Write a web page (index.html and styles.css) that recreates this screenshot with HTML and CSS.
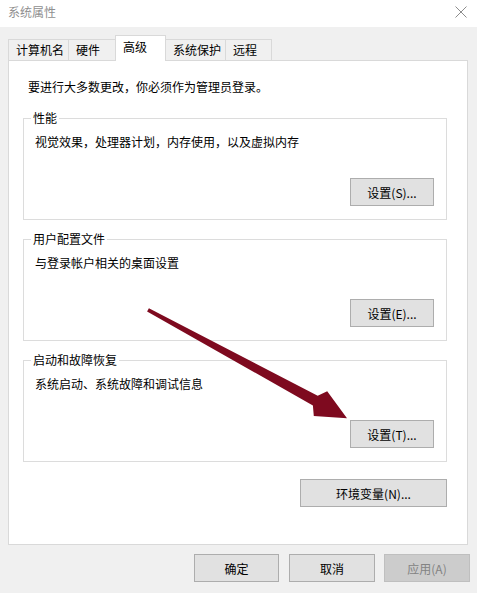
FILE: index.html
```html
<!DOCTYPE html>
<html lang="zh-CN">
<head>
    <meta charset="UTF-8">
    <meta name="viewport" content="width=device-width, initial-scale=1.0">
    <title>系统属性</title>
    <link rel="stylesheet" href="styles.css">
</head>
<body>

    <div class="window">
        <!-- Title Bar -->
        <div class="titlebar">
            <span class="title">系统属性</span>
            <svg class="close" width="12" height="12" viewBox="0 0 12 12">
                <path d="M0.5 0.5 L11.5 11.5 M11.5 0.5 L0.5 11.5" stroke="#8c8c8c" stroke-width="1" fill="none"/>
            </svg>
        </div>

        <!-- Tabs -->
        <div class="tabs">
            <div class="tab">计算机名</div>
            <div class="tab">硬件</div>
            <div class="tab tab-active">高级</div>
            <div class="tab">系统保护</div>
            <div class="tab tab-short">远程</div>
        </div>

        <!-- Tab Panel -->
        <div class="panel">
            <p class="note">要进行大多数更改，你必须作为管理员登录。</p>

            <div class="group">
                <span class="group-title">性能</span>
                <p class="desc">视觉效果，处理器计划，内存使用，以及虚拟内存</p>
                <div class="group-actions"><button class="btn">设置(S)...</button></div>
            </div>

            <div class="group">
                <span class="group-title">用户配置文件</span>
                <p class="desc">与登录帐户相关的桌面设置</p>
                <div class="group-actions"><button class="btn">设置(E)...</button></div>
            </div>

            <div class="group">
                <span class="group-title">启动和故障恢复</span>
                <p class="desc">系统启动、系统故障和调试信息</p>
                <div class="group-actions"><button class="btn">设置(T)...</button></div>
            </div>

            <div class="panel-actions"><button class="btn btn-wide">环境变量(N)...</button></div>
        </div>

        <!-- Dialog Buttons -->
        <div class="footer">
            <button class="btn">确定</button>
            <button class="btn">取消</button>
            <button class="btn btn-disabled">应用(A)</button>
        </div>

        <!-- Annotation arrow -->
        <svg class="arrow" width="477" height="593" viewBox="0 0 477 593">
            <polygon fill="#7e0a1f" points="148.9,308.3 317.7,395.8 327.2,391.3 347,418.2 313.8,416.1 312.9,405.5 147.1,311.5"/>
        </svg>
    </div>

</body>
</html>
```

FILE: styles.css
```css
/* General Reset */
* {
    margin: 0;
    padding: 0;
    box-sizing: border-box;
}

body {
    font-family: "Noto Sans CJK SC", "Microsoft YaHei", sans-serif;
    font-size: 12px;
    line-height: 16px;
    color: #000;
    background-color: #f0f0f0;
}

.window {
    position: relative;
    width: 477px;
    height: 593px;
    overflow: hidden;
}

/* Title Bar */
.titlebar {
    height: 27px;
    background-color: #fff;
    display: flex;
    align-items: center;
    justify-content: space-between;
    padding: 0 10px 4px 8px;
}

.title {
    color: #8f8f8f;
}

/* Tabs */
.tabs {
    display: flex;
    align-items: flex-end;
    height: 33px;
    padding-left: 8px;
}

.tab {
    position: relative;
    height: 21px;
    min-width: 48px;
    padding: 2px 4px 0 7px;
    border: 1px solid #d9d9d9;
    border-bottom: none;
    margin-left: -1px;
    background-color: #f0f0f0;
}

.tab:first-child {
    margin-left: 0;
}

.tab-short {
    min-width: 47px;
}

.tab-active {
    z-index: 2;
    height: 26px;
    min-width: 51px;
    margin-bottom: -1px;
    padding-top: 3px;
    background-color: #fff;
}

/* Panel */
.panel {
    position: relative;
    width: 460px;
    height: 485px;
    margin-left: 8px;
    background-color: #fff;
    border: 1px solid #d9d9d9;
    padding-top: 18px;
}

.note {
    padding-left: 19px;
}

/* Group Boxes */
.group {
    position: relative;
    width: 424px;
    margin: 19px 0 0 14px;
    padding: 15px 12px 13px 11px;
    border: 1px solid #dcdcdc;
}

.note + .group {
    margin-top: 23px;
}

.group-title {
    position: absolute;
    top: -9px;
    left: 7px;
    padding: 0 2px;
    background-color: #fff;
}

.group-actions {
    display: flex;
    justify-content: flex-end;
    margin-top: 28px;
}

.panel-actions {
    display: flex;
    justify-content: flex-end;
    width: 438px;
    margin-top: 17px;
}

/* Buttons */
.btn {
    width: 84px;
    height: 28px;
    font-family: inherit;
    font-size: 12px;
    color: #000;
    background-color: #e1e1e1;
    border: 1px solid #adadad;
}

.btn-wide {
    width: 147px;
}

.btn-disabled {
    color: #838383;
    background-color: #cccccc;
    border-color: #bfbfbf;
}

/* Footer */
.footer {
    display: flex;
    justify-content: flex-end;
    gap: 10px;
    margin-top: 9px;
    padding-right: 7px;
}

.footer .btn {
    width: 86px;
}

.footer .btn:first-child {
    width: 85px;
}

.footer .btn-disabled {
    margin-left: -1px;
}

/* Annotation */
.arrow {
    position: absolute;
    left: 0;
    top: 0;
    pointer-events: none;
}
```
